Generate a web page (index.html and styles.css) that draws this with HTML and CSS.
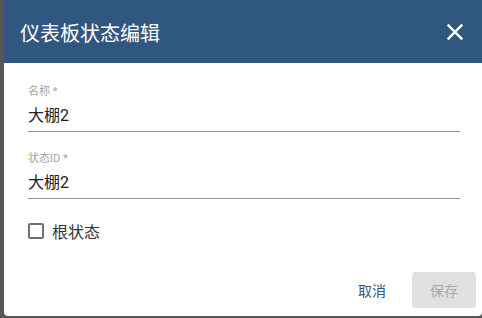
FILE: index.html
```html
<!DOCTYPE html>
<html lang="zh">
<head>
  <meta charset="UTF-8">
  <title>仪表板状态编辑</title>
  <link rel="stylesheet" href="styles.css">
</head>
<body>
  <div class="backdrop">
    <div class="dialog">
      <div class="header">
        <h2 class="title">仪表板状态编辑</h2>
        <button class="close-btn">
          <svg class="close-icon" viewBox="0 0 24 24" fill="none" stroke="currentColor" stroke-width="2.2" stroke-linecap="square">
            <line x1="18" y1="6" x2="6" y2="18"></line>
            <line x1="6" y1="6" x2="18" y2="18"></line>
          </svg>
        </button>
      </div>

      <div class="content">
        <div class="field">
          <div class="field-label">名称 *</div>
          <div class="field-value">大棚2</div>
        </div>
        <div class="field">
          <div class="field-label">状态ID *</div>
          <div class="field-value">大棚2</div>
        </div>
        <label class="check">
          <span class="check-box"></span>
          <span class="check-label">根状态</span>
        </label>
      </div>

      <div class="actions">
        <button class="btn btn-text">取消</button>
        <button class="btn btn-disabled">保存</button>
      </div>
    </div>
  </div>
</body>
</html>
```

FILE: styles.css
```css
* {
  box-sizing: border-box;
  margin: 0;
  padding: 0;
}

body {
  width: 482px;
  height: 318px;
  overflow: hidden;
  font-family: Roboto, "Noto Sans CJK SC", sans-serif;
  background-color: #565656;
}

.backdrop {
  padding-left: 4px;
  height: 318px;
}

.dialog {
  display: flex;
  flex-direction: column;
  height: 316px;
  background-color: white;
  border-radius: 0 0 4px 4px;
  overflow: hidden;
}

.header {
  display: flex;
  align-items: center;
  justify-content: space-between;
  height: 63px;
  padding: 0 14px 0 16px;
  background-color: #30577f;
  color: white;
}

.title {
  font-family: "Noto Sans CJK SC", sans-serif;
  font-size: 20px;
  font-weight: 400;
  margin-top: 2px;
}

.close-btn {
  display: flex;
  background: none;
  border: none;
  color: white;
  padding: 0;
  margin-top: 1px;
}

.close-icon {
  width: 26px;
  height: 26px;
}

.content {
  flex: 1;
  padding: 22px 22px 0 24px;
}

.field {
  border-bottom: 1px solid #949494;
  margin-bottom: 20px;
  padding-bottom: 2px;
}

.field-label {
  font-size: 11px;
  line-height: 14px;
  color: #a3a3a3;
}

.field-value {
  font-size: 16px;
  line-height: 26px;
  padding-top: 4px;
  color: #222;
}

.check {
  display: flex;
  align-items: center;
  gap: 8px;
  margin-top: 2px;
}

.check-box {
  width: 16px;
  height: 16px;
  border: 2px solid #707070;
  border-radius: 2px;
}

.check-label {
  font-size: 16px;
  color: #333;
}

.actions {
  display: flex;
  justify-content: flex-end;
  align-items: center;
  gap: 26px;
  padding: 0 6px 8px 0;
}

.btn {
  font-family: "Noto Sans CJK SC", sans-serif;
  font-size: 14px;
  border: none;
  border-radius: 4px;
  background: none;
  height: 36px;
}

.btn-text {
  color: #30577f;
  padding: 0 0;
}

.btn-disabled {
  width: 64px;
  background-color: #e0e0e0;
  color: #a8a8a8;
}
```
